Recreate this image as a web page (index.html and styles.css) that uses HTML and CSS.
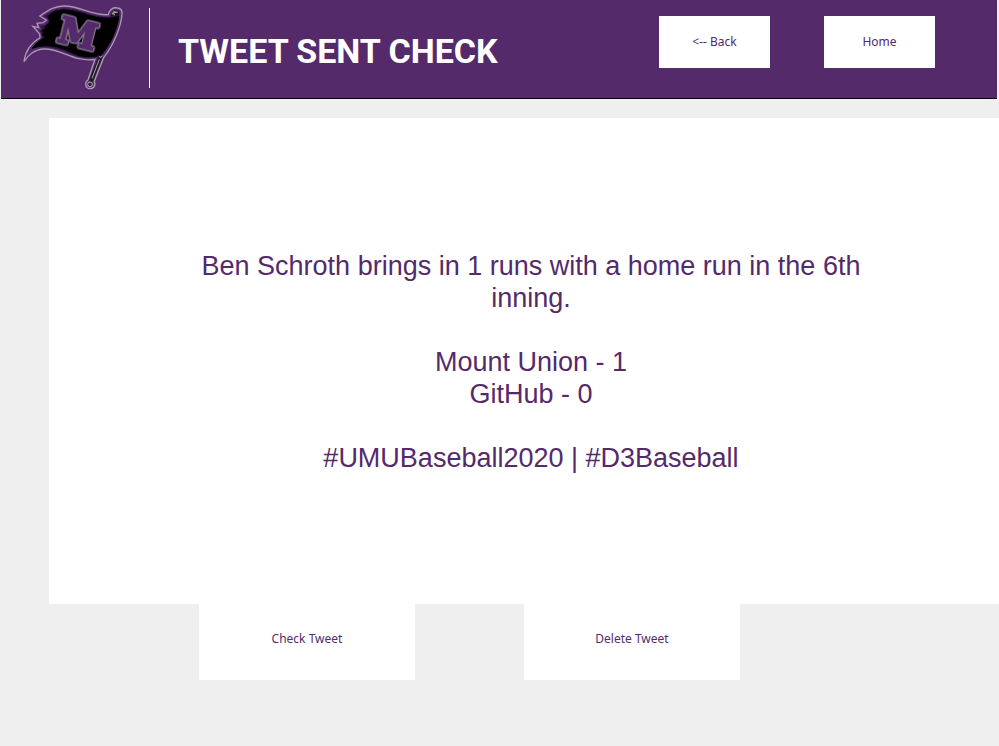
FILE: index.html
```html
<!DOCTYPE html>
<html lang="en">
<head>
<meta charset="utf-8">
<meta name="viewport" content="width=device-width, initial-scale=1">
<title>Tweet Sent Check</title>
<link rel="stylesheet" href="styles.css">
</head>
<body>
<header class="header">
  <svg class="logo" viewBox="60 0 318 282" role="img" aria-label="Mount Union flag logo">
    <path class="flag-edge" d="M72 185 C76 151 97 127 119 114 Q123 104 113 95 L99 79 L116 83 L111 70 L130 68 L139 60 L119 48 C142 34 159 19 191 18 C239 17 275 47 325 44 C327 29 340 21 352 24 Q367 25 366 41 C364 76 343 132 311 173 L283 244 C289 260 278 266 270 266 C254 264 254 246 264 240 L285 178 C219 188 185 145 132 147 C105 148 83 165 72 185 Z"/>
    <path class="flag-rim" d="M97 145 C103 134 113 123 127 116 Q130 102 117 91 L130 90 L119 77 L137 75 L148 62 L132 48 C153 36 170 25 191 25 C241 25 274 54 331 51 C333 36 340 29 352 31 Q359 32 358 43 C356 75 337 128 305 168 C278 177 247 175 217 164 C180 150 151 134 97 145 Z"/>
    <path class="flag" d="M97 145 C107 130 120 120 139 111 L126 106 Q135 99 126 90 L139 85 L136 78 L149 68 L146 47 C162 35 177 30 193 30 C241 31 276 59 334 54 L357 49 C350 90 332 135 301 166 C267 174 235 169 214 157 C176 140 145 128 97 145 Z"/>
    <text class="flag-letter" x="169" y="124" transform="rotate(14 169 124)">M</text>
    <path class="knob" d="M334 48 Q331 39 340 35 Q351 29 358 38 L353 48 L346 40 L347 48 Z"/>
    <path class="knob-shine" d="M336 43 L342 36 L353 37 M343 46 L342 41"/>
    <path class="pole" d="M301 172 L272 244"/>
    <path class="pole-shine" d="M297 167 L301 173 L307 167 M298 178 L276 235"/>
    <circle class="pole-end" cx="270" cy="253" r="7"/>
  </svg>
  <h1 class="title">TWEET SENT CHECK</h1>
  <nav class="nav">
    <button class="button" type="button">&lt;-- Back</button>
    <button class="button" type="button">Home</button>
  </nav>
</header>
<main class="main">
  <section class="panel">
    <p class="tweet">Ben Schroth brings in 1 runs with a home run in the 6th inning.</p>
    <p class="tweet">Mount Union - 1<br>GitHub - 0</p>
    <p class="tweet">#UMUBaseball2020 | #D3Baseball</p>
  </section>
  <div class="actions">
    <button class="button button-large" type="button">Check Tweet</button>
    <button class="button button-large" type="button">Delete Tweet</button>
  </div>
</main>
</body>
</html>
```
FILE: styles.css
```css
* {
  box-sizing: border-box;
}

body {
  margin: 0;
  background: #efefef;
  color: #542a6b;
  font-family: "Liberation Sans", Arial, sans-serif;
}

.header {
  display: flex;
  align-items: flex-start;
  margin: 0 2px 0 1px;
  padding-left: 19px;
  min-height: 99px;
  background: #542a6b;
  border-bottom: 1px solid #000;
}

.logo {
  flex: none;
  width: 106px;
  height: 94px;
}

.flag-edge {
  fill: #542a6b;
  stroke: #a69aae;
  stroke-width: 4;
}

.flag-rim {
  fill: #35124a;
}

.flag {
  fill: #000;
  stroke: #000;
  stroke-width: 3;
}

.flag-letter {
  fill: #542a6b;
  stroke: #542a6b;
  stroke-width: 7;
  filter: drop-shadow(2px 0 0 #8c8094) drop-shadow(-2px 0 0 #8c8094) drop-shadow(0 2px 0 #8c8094) drop-shadow(0 -2px 0 #8c8094);
  font-family: "DejaVu Serif", serif;
  font-size: 104px;
  font-weight: bold;
}

.knob {
  fill: #171519;
}

.knob-shine,
.pole-shine {
  fill: none;
  stroke: #a9a9a5;
  stroke-width: 4;
}

.pole {
  stroke: #1c1a1e;
  stroke-width: 11;
}

.pole-shine {
  stroke-width: 3;
}

.pole-end {
  fill: #33243b;
  stroke: #b0a8b4;
  stroke-width: 3;
}

.title {
  flex: none;
  height: 80px;
  margin: 8px 0 0 23px;
  padding: 3px 0 0 28px;
  border-left: 1px solid #fff;
  color: #fff;
  font-family: Roboto, sans-serif;
  font-size: 34px;
  font-weight: 700;
  line-height: 80px;
}

.nav {
  display: flex;
  gap: 54px;
  margin: 16px 62px 0 auto;
}

.button {
  width: 111px;
  height: 52px;
  padding: 0 0 2px;
  border: 0;
  background: #fff;
  color: #542a6b;
  font-family: "Noto Sans", sans-serif;
  font-size: 12px;
}

.main {
  padding: 19px 0 0 49px;
}

.panel {
  display: flex;
  flex-direction: column;
  gap: 32px;
  padding: 132px 132px 130px 146px;
  background: #fff;
}

.tweet {
  margin: 0;
  font-size: 27px;
  line-height: 32px;
  text-align: center;
}

.actions {
  display: flex;
  gap: 109px;
  padding-left: 150px;
}

.button-large {
  width: 216px;
  height: 76px;
  padding-bottom: 8px;
}
```
